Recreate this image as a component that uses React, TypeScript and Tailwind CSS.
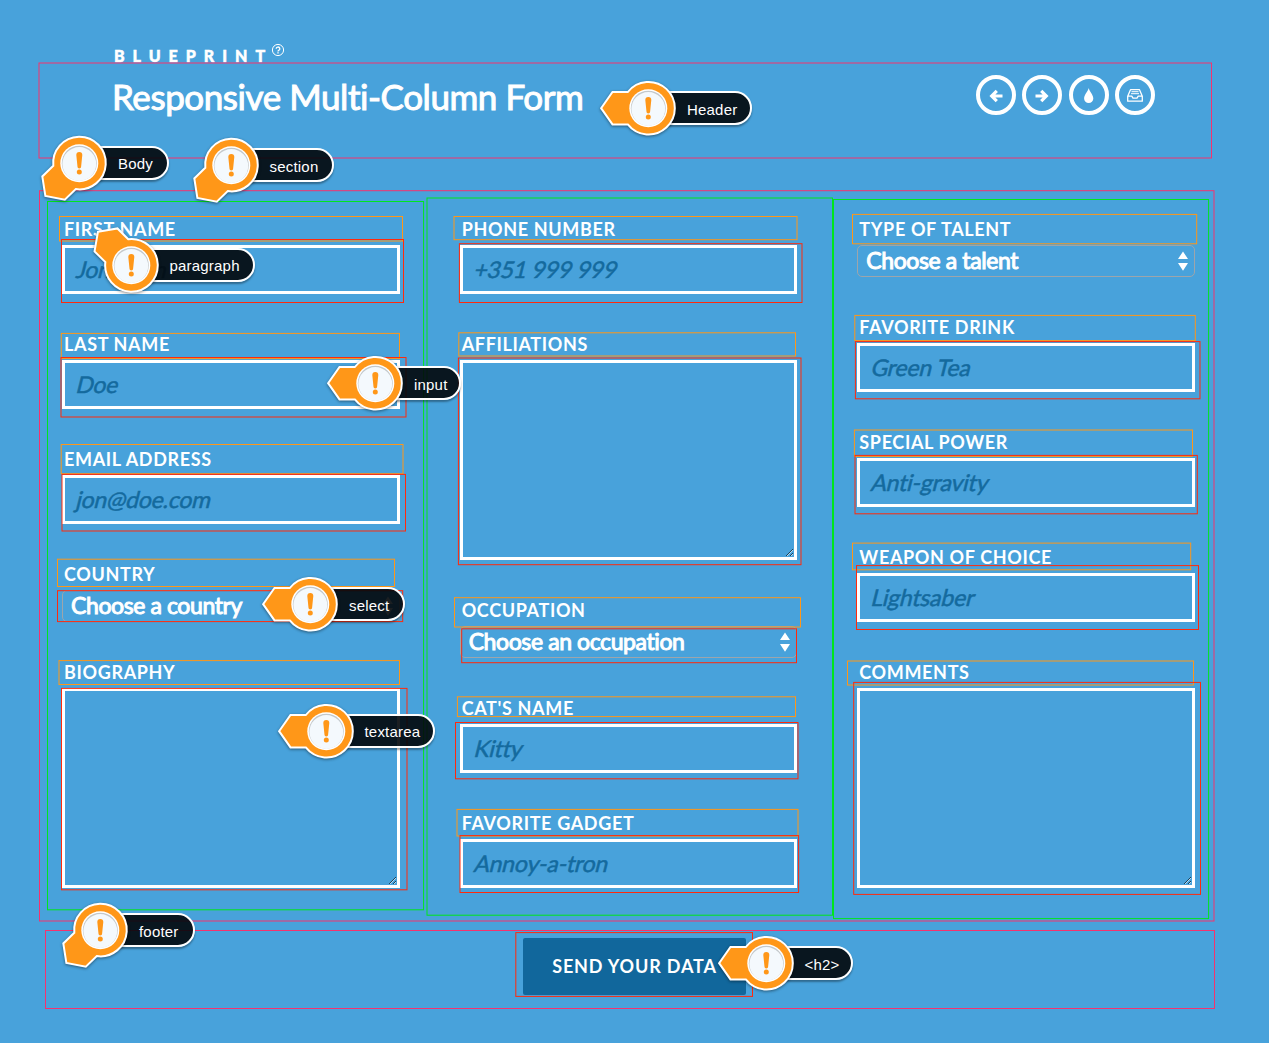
import React from "react";

type FieldSpec = {
  label: string;
  kind: "input" | "select" | "textarea";
  text?: string;
};

const columns: FieldSpec[][] = [
  [
    { label: "First Name", kind: "input", text: "Jonathan" },
    { label: "Last Name", kind: "input", text: "Doe" },
    { label: "Email Address", kind: "input", text: "jon@doe.com" },
    { label: "Country", kind: "select", text: "Choose a country" },
    { label: "Biography", kind: "textarea" },
  ],
  [
    { label: "Phone Number", kind: "input", text: "+351 999 999" },
    { label: "Affiliations", kind: "textarea" },
    { label: "Occupation", kind: "select", text: "Choose an occupation" },
    { label: "Cat's Name", kind: "input", text: "Kitty" },
    { label: "Favorite Gadget", kind: "input", text: "Annoy-a-tron" },
  ],
  [
    { label: "Type of Talent", kind: "select", text: "Choose a talent" },
    { label: "Favorite Drink", kind: "input", text: "Green Tea" },
    { label: "Special Power", kind: "input", text: "Anti-gravity" },
    { label: "Weapon of Choice", kind: "input", text: "Lightsaber" },
    { label: "Comments", kind: "textarea" },
  ],
];

function Control({ kind, text }: FieldSpec) {
  const [value, setValue] = React.useState("");
  if (kind === "textarea") {
    return <textarea className="block h-[200px] w-full resize border-[3px] border-white bg-transparent outline-none" />;
  }
  if (kind === "select") {
    return (
      <div className="relative h-8">
        <select className="h-8 w-full appearance-none rounded-[5px] border border-[#9da5ab] bg-transparent pb-[2px] pl-2 text-[23px] leading-[28px] font-normal tracking-[-0.4px] text-white outline-none [-webkit-text-stroke:1px_white]">
          <option>{text}</option>
        </select>
        <svg className="pointer-events-none absolute top-[6px] right-[7px]" width="10" height="20" viewBox="0 0 10 20" fill="#fff">
          <path d="M5 .5 10 8H0ZM0 12h10L5 19.700Z" />
        </svg>
      </div>
    );
  }
  return (
    <div className="grid h-[49px] w-full items-center border-[3px] border-white">
      {value === "" && (
        <span className="col-start-1 row-start-1 origin-[0_75%] -skew-x-[14deg] pb-[2px] pl-2.5 text-[23px] leading-7 tracking-[-0.2px] whitespace-nowrap text-[#146a9e] [-webkit-text-stroke:0.5px_#146a9e] [font-variant-ligatures:none]">
          {text}
        </span>
      )}
      <input
        value={value}
        onChange={(e) => setValue(e.target.value)}
        className="col-start-1 row-start-1 h-full w-full bg-transparent px-2.5 text-[23px] text-white outline-none"
      />
    </div>
  );
}

function Field(props: FieldSpec) {
  return (
    <label className="block">
      <span className="block h-8 pl-0.5 text-[18px] leading-8 font-bold tracking-[0.65px] text-white uppercase">{props.label}</span>
      <Control {...props} />
    </label>
  );
}

function RoundButton({ children }: { children: React.ReactNode }) {
  return (
    <a className="flex size-10 items-center justify-center rounded-full border-4 border-white">
      <svg width="20" height="20" viewBox="-10 -10 20 20" fill="none" stroke="#fff">
        {children}
      </svg>
    </a>
  );
}

/* x1, y1, x2, y2 of every outlined region */
const regions: [number, number, number, number][] = [
  [39, 63, 1211.5, 158],
  [39.5, 190.7, 1214, 921],
  [45.5, 930.5, 1214.5, 1008.5],
];
const columnOutlines: [number, number, number, number][] = [
  [47.5, 201.5, 423.6, 909.8],
  [427, 198, 832.5, 915.2],
  [833.5, 199.5, 1208.6, 918.6],
];
const labelOutlines: [number, number, number, number][] = [
  [59.5, 216.5, 402.5, 241],
  [61.3, 333.4, 399.5, 358.6],
  [61.2, 444.5, 403, 473.7],
  [57.5, 559.2, 394.5, 586.5],
  [59, 660.6, 399.5, 684.5],
  [454, 216.5, 797, 239.7],
  [458.8, 332.8, 795.5, 356],
  [454.5, 597.7, 800.5, 627],
  [457.4, 696.8, 795.5, 716.6],
  [457, 809.4, 798, 836],
  [852.5, 214.4, 1196.7, 243.8],
  [854.8, 315.4, 1195.3, 340.6],
  [854.4, 430, 1192.5, 456.4],
  [852.5, 543.1, 1190.7, 569.8],
  [847.5, 661, 1193.5, 685],
];
const controlOutlines: [number, number, number, number][] = [
  [61.5, 239.5, 403.5, 302.5],
  [61, 357.5, 406, 417],
  [62, 474.4, 405.5, 531],
  [57.5, 590.7, 402.7, 621.6],
  [61.5, 688.4, 407, 889.8],
  [459.4, 243.7, 802, 302.5],
  [458.4, 358, 801, 564.7],
  [461.7, 628.8, 796.5, 662.7],
  [455.5, 722.5, 798, 778.8],
  [460, 835.6, 798.6, 892.5],
  [855.4, 341.6, 1200, 398.8],
  [855, 455.4, 1197.3, 513.8],
  [856.5, 565.6, 1198.5, 629.5],
  [853.7, 682.4, 1200.5, 894.4],
  [515.8, 932.6, 752.5, 996.4],
];

function Outlines({ boxes, color }: { boxes: [number, number, number, number][]; color: string }) {
  return (
    <g stroke={color}>
      {boxes.map(([x1, y1, x2, y2]) => (
        <rect key={`${x1}-${y1}`} x={x1} y={y1} width={x2 - x1} height={y2 - y1} />
      ))}
    </g>
  );
}

function Pin({ place, pill, angle, text }: { place: string; pill: string; angle: number; text: string }) {
  return (
    <div className={`absolute size-0 ${place}`}>
      <div
        className={`absolute top-[-17px] left-0 flex h-[34px] items-center rounded-r-full border-2 border-white bg-[#02070a]/90 pl-[37px] font-['Liberation_Sans',Arial,sans-serif] text-[15px] tracking-[0.2px] text-white shadow-[0_2px_2px_rgba(0,0,0,0.35)] ${pill}`}
      >
        <span className="pt-[3px] leading-[18px] whitespace-nowrap">{text}</span>
      </div>
      <svg
        className="absolute top-[-55px] left-[-55px] drop-shadow-[0_1.500px_1.500px_rgba(0,0,0,0.45)]"
        width="110"
        height="110"
        viewBox="-55 -55 110 110"
      >
        <g transform={`translate(.3 .2) rotate(${angle})`}>
          <path
            d="M-20.500 -16.200H-35.800L-47.200 0L-35.800 16.200H-20.500A26.300 26.300 0 1 0 -20.500 -16.200Z"
            fill="#ff9718"
            stroke="#fff"
            strokeWidth="2"
          />
        </g>
        <g transform="translate(.3 .2)">
          <circle r="19" fill="#fff" />
          <circle r="17.500" fill="#c3c8cb" />
          <circle cy="0.800" r="16.900" fill="#f4f9fd" />
          <path d="M-3 -8.200a3 3 0 0 1 6 0L1.800 3.600a1.800 1.800 0 0 1-3.600 0Z" fill="#ff9718" />
          <circle cy="8.800" r="2.500" fill="#ff9718" />
        </g>
      </svg>
    </div>
  );
}

export default function App() {
  return (
    <div className="relative h-[1043px] w-[1269px] overflow-hidden bg-[#48a2db] font-[Lato,sans-serif] text-white">
      <header className="flex h-[213px] items-start justify-between pr-[114px] pl-[113px]">
        <div className="pt-[45px]">
          <div className="flex h-[22px] items-start pl-px">
            <span className="text-[16px] leading-[22px] font-black tracking-[8px] [-webkit-text-stroke:0.5px_white]">BLUEPRINT</span>
            <svg className="-mt-[2px] -ml-[2px]" width="14" height="14" viewBox="0 0 14 14" fill="none" stroke="#fff">
              <circle cx="7" cy="7" r="5.600" strokeWidth="1" />
              <path d="M5.200 5.800a1.800 1.700 0 1 1 2.500 1.500q-.7.300-.7 1.100" strokeWidth="1.300" />
              <path d="M7 9.300v1.300" strokeWidth="1.400" />
            </svg>
          </div>
          <h1 className="mt-[7px] -ml-px text-[35px] leading-[44px] font-normal tracking-[-0.43px] whitespace-nowrap [-webkit-text-stroke:1px_white]">
            Responsive Multi-Column Form
          </h1>
        </div>
        <nav className="flex gap-[6.400px] pt-[75px]">
          <RoundButton>
            <path d="M6.500 1H-4M.8-4.200-4.300 1 .8 6.200" strokeWidth="3.200" />
          </RoundButton>
          <RoundButton>
            <path d="M-6.500 1H4M-.8-4.200 4.300 1-.8 6.200" strokeWidth="3.200" />
          </RoundButton>
          <RoundButton>
            <path d="M-.3-7C.3-3.500 4.300-.5 4.300 3.500a4.600 4.500 0 0 1-9.200 0C-4.900-.5-.9-3.500-.3-7Z" fill="#fff" stroke="none" />
          </RoundButton>
          <RoundButton>
            <path d="M-7.300 1.200-4.500-5.300H4.500L7.300 1.200V6.200H-7.300ZM-7.300 1.200H-3.200L-2 3.200H2L3.200 1.200H7.300" strokeWidth="1.300" strokeLinejoin="round" />
            <path d="M-3.500-3.300h7M-4-1.300h8" strokeWidth="1" />
          </RoundButton>
        </nav>
      </header>

      <form>
        <div className="grid grid-cols-3 gap-[60px] pr-[74px] pl-[62px]">
          {columns.map((fields, i) => (
            <section key={i} className="flex flex-col gap-[34px]">
              {fields.map((f) => (
                <Field key={f.label} {...f} />
              ))}
            </section>
          ))}
        </div>
        <footer className="flex justify-center pt-[50px]">
          <button type="button" className="h-[57px] w-[223px] rounded-[2px] bg-[#11679c] text-[18px] font-bold tracking-[0.85px] whitespace-nowrap text-white uppercase">
            Send your data
          </button>
        </footer>
      </form>

      <div className="pointer-events-none absolute inset-0">
        <svg className="absolute inset-0" width="1269" height="1043" fill="none" strokeWidth="1">
          <Outlines boxes={columnOutlines} color="#00e61c" />
          <Outlines boxes={regions} color="#f5326e" />
          <Outlines boxes={labelOutlines} color="#ff9718" />
          <Outlines boxes={controlOutlines} color="#ff2a0c" />
        </svg>
        <Pin place="left-[648px] top-[108px]" pill="w-[104px]" angle={0} text="Header" />
        <Pin place="left-[79px] top-[162.500px]" pill="w-[90px]" angle={-44} text="Body" />
        <Pin place="left-[230.500px] top-[165px]" pill="w-[103px]" angle={-44} text="section" />
        <Pin place="left-[130.500px] top-[264.500px]" pill="w-[124px]" angle={45} text="paragraph" />
        <Pin place="left-[375px] top-[383px]" pill="w-[86px]" angle={0} text="input" />
        <Pin place="left-[310px] top-[604px]" pill="w-[94.500px]" angle={0} text="select" />
        <Pin place="left-[325.500px] top-[730.500px]" pill="w-[109px]" angle={0} text="textarea" />
        <Pin place="left-[100px] top-[930px]" pill="w-[94.500px]" angle={-44} text="footer" />
        <Pin place="left-[765.500px] top-[963px]" pill="w-[87px]" angle={0} text="<h2>" />
      </div>
    </div>
  );
}
